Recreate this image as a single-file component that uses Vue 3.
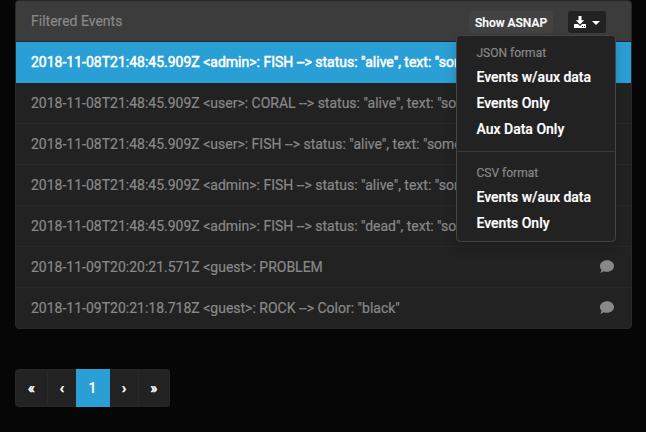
<script setup>
const events = [
  { text: '2018-11-08T21:48:45.909Z <admin>: FISH --> status: "alive", text: "some', active: true },
  { text: '2018-11-08T21:48:45.909Z <user>: CORAL --> status: "alive", text: "some' },
  { text: '2018-11-08T21:48:45.909Z <user>: FISH --> status: "alive", text: "some' },
  { text: '2018-11-08T21:48:45.909Z <admin>: FISH --> status: "alive", text: "some' },
  { text: '2018-11-08T21:48:45.909Z <admin>: FISH --> status: "dead", text: "some' },
  { text: '2018-11-09T20:20:21.571Z <guest>: PROBLEM', comment: true },
  { text: '2018-11-09T20:21:18.718Z <guest>: ROCK --> Color: "black"', comment: true },
]
const groups = [
  { title: 'JSON format', items: ['Events w/aux data', 'Events Only', 'Aux Data Only'] },
  { title: 'CSV format', items: ['Events w/aux data', 'Events Only'] },
]
const pages = ['«', '‹', '1', '›', '»']
</script>

<template>
  <main class="page">
    <section class="panel">
      <header class="heading">
        <span class="title">Filtered Events</span>
        <button class="btn asnap">Show ASNAP</button>
        <div class="dropdown">
          <button class="btn download" aria-label="Download">
            <svg width="12" height="12" viewBox="0 0 12 12" fill="currentColor">
              <path d="M4.5 0h3v4.2h2.7L6 8.5 1.8 4.2h2.700z" />
              <path fill-rule="evenodd" d="M.5 8h3.400L6 10l2.100-2h3.400q.5 0 .5.5v3q0 .5-.5.5H.5q-.5 0-.5-.5v-3Q0 8 .5 8zM8 10v1h1v-1zm2 0v1h1v-1z" />
            </svg>
            <i class="caret"></i>
          </button>
          <div class="menu">
            <ul v-for="g in groups" :key="g.title" class="group">
              <li class="menu-title">{{ g.title }}</li>
              <li v-for="item in g.items" :key="item" class="menu-item">{{ item }}</li>
            </ul>
          </div>
        </div>
      </header>
      <ul class="events">
        <li v-for="(e, i) in events" :key="i" class="event" :class="{ active: e.active }">
          <span>{{ e.text }}</span>
          <svg v-if="e.comment" class="comment" width="14" height="13" viewBox="0 0 14 13" fill="currentColor">
            <path d="M7 .2c3.900 0 7 2.500 7 5.800s-3.100 5.800-7 5.800c-1.200 0-2.300-.2-3.300-.6C2.700 12 1.500 12.700.2 12.700c.7-.8 1.200-1.800 1.300-2.700C.6 8.900 0 7.500 0 6 0 2.700 3.100.2 7 .2z" />
          </svg>
        </li>
      </ul>
    </section>
    <nav class="pagination">
      <a v-for="p in pages" :key="p" class="page-link" :class="{ current: p === '1' }">{{ p }}</a>
    </nav>
  </main>
</template>

<style>
body {
  background: #060606;
}
</style>

<style scoped>
.page {
  box-sizing: border-box;
  height: 432px;
  padding: 0 14px 0 15px;
  overflow: hidden;
  background: #060606;
  color: #888;
  font: 14px/20px Roboto, sans-serif;
  -webkit-text-stroke: 0.2px currentColor;
}
ul {
  list-style: none;
  margin: 0;
  padding: 0;
}
.panel {
  box-sizing: border-box;
  height: 329px;
  border: 1px solid #282828;
  border-radius: 4px;
  background: #222;
}
.heading {
  box-sizing: border-box;
  display: flex;
  align-items: center;
  height: 41px;
  padding: 0 25px 0 15px;
  border-bottom: 1px solid #282828;
  border-radius: 3px 3px 0 0;
  background: #3c3c3c;
}
.title {
  flex: 1;
}
.btn {
  box-sizing: border-box;
  display: flex;
  align-items: center;
  justify-content: center;
  height: 22px;
  padding: 0;
  border: 0;
  border-radius: 3px;
  color: #fff;
  font: 500 12px/18px Roboto, sans-serif;
}
.asnap {
  width: 84px;
  margin: 2px 15px 0 0;
  padding-top: 1px;
  background: #424242;
}
.dropdown {
  position: relative;
  margin-top: 2px;
}
.download {
  width: 38px;
  gap: 6px;
  background: #222;
}
.caret {
  margin-top: 2px;
  border-top: 4px solid #fff;
  border-left: 4px solid transparent;
  border-right: 4px solid transparent;
}
.menu {
  position: absolute;
  z-index: 2;
  top: 24px;
  right: -10px;
  box-sizing: border-box;
  width: 160px;
  padding: 5px 0;
  border: 1px solid #444;
  border-radius: 4px;
  background: #222;
  box-shadow: 0 6px 12px rgba(0, 0, 0, 0.175);
}
.group + .group {
  margin-top: 9px;
  padding-top: 9px;
  border-top: 1px solid #383838;
}
.menu-title {
  padding: 4px 19.5px 2px;
  font-size: 12px;
  line-height: 17px;
}
.menu-item {
  padding: 3px 19.5px;
  color: #fff;
  font-weight: 500;
  -webkit-text-stroke: 0.2px #fff;
}
.event {
  box-sizing: border-box;
  display: flex;
  align-items: center;
  justify-content: space-between;
  height: 41px;
  padding: 0 17px 0 15px;
  border-bottom: 1px solid #282828;
  white-space: nowrap;
}
.event:last-child {
  height: 40px;
  border-bottom: 0;
}
.comment {
  margin-bottom: 1px;
}
.active {
  border-color: #2a9fd6;
  background: #2a9fd6;
  color: #fff;
  -webkit-text-stroke: 0.5px #fff;
}
.pagination {
  display: flex;
  width: 155px;
  height: 38px;
  margin-top: 40px;
}
.page-link {
  box-sizing: border-box;
  display: flex;
  align-items: center;
  justify-content: center;
  width: 29px;
  border: 1px solid #282828;
  border-left-width: 0;
  background: #222;
  color: #fff;
  font-weight: 500;
  -webkit-text-stroke: 0.5px #fff;
}
.page-link:first-child {
  width: 33px;
  border-left-width: 1px;
  border-radius: 4px 0 0 4px;
}
.page-link:nth-child(2) {
  width: 28px;
  border-right-width: 0;
}
.page-link:last-child {
  width: 31px;
  border-radius: 0 4px 4px 0;
}
.page-link.current {
  width: 34px;
  border-color: #2a9fd6;
  background: #2a9fd6;
  -webkit-text-stroke: 0.1px #fff;
}
</style>
